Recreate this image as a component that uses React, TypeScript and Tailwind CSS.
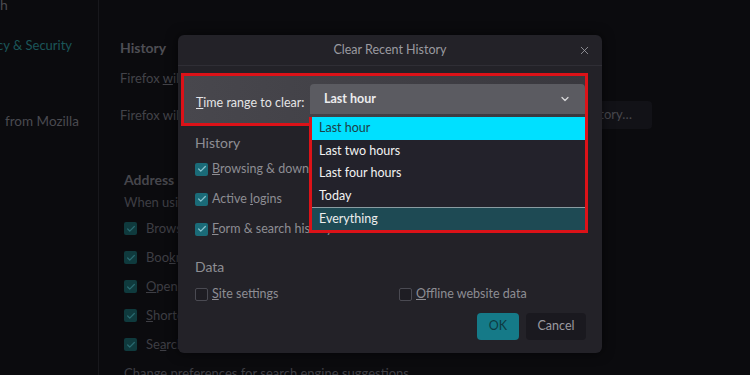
import { Check, X, ChevronDown } from 'lucide-react';

function DimBox({ label }: { label: React.ReactNode }) {
  return (
    <div className="flex items-center gap-[9px] h-[29px]">
      <span className="w-[13px] h-[13px] rounded-[2px] bg-[#0f3a3d] flex items-center justify-center">
        <Check className="w-[10px] h-[10px] text-[#2a6a70]" strokeWidth={3} />
      </span>
      <span className="text-[13px] text-[#3e3e44] whitespace-nowrap">{label}</span>
    </div>
  );
}

function Box({ checked, label }: { checked?: boolean; label: React.ReactNode }) {
  return (
    <div className="flex items-center gap-[4px] h-[18px]">
      {checked ? (
        <span className="w-[13px] h-[13px] rounded-[2px] bg-[#1a6b78] flex items-center justify-center">
          <Check className="w-[10px] h-[10px] text-[#8cc4cf]" strokeWidth={3} />
        </span>
      ) : (
        <span className="w-[13px] h-[13px] rounded-[2px] border border-[#4a4a52] bg-[#1e1d23]" />
      )}
      <span className="text-[12.5px] text-[#8d8d93] whitespace-nowrap">{label}</span>
    </div>
  );
}

export default function App() {
  return (
    <div className="relative w-[750px] h-[375px] overflow-hidden bg-[#0b0b0e] flex font-[Lato,sans-serif]">
      {/* sidebar */}
      <div className="w-[99px] shrink-0 border-r border-[#18181c] flex flex-col">
        <div className="text-[14px] text-[#4a4a50] leading-[20px] -mt-[5px]">h</div>
        <div className="text-[13px] text-[#1b5659] leading-[20px] mt-[20px] -ml-[3px] whitespace-nowrap">cy &amp; Security</div>
        <div className="text-[13.5px] text-[#4a4a50] leading-[20px] mt-[56px] ml-[5px] whitespace-nowrap">from Mozilla</div>
      </div>
      {/* main */}
      <div className="flex-1 pl-[21px] flex flex-col">
        <div className="mt-[38px] text-[14px] font-bold text-[#4e4e54] leading-[20px]">History</div>
        <div className="mt-[11px] text-[13px] text-[#434349] leading-[18px]">Firefox <span className="underline">w</span>ill</div>
        <div className="mt-[14px] pr-[98px] flex items-center justify-between">
          <div className="text-[13px] text-[#434349] leading-[18px]">Firefox will</div>
          <div className="h-[28px] w-[140px] bg-[#121217] rounded-[4px] flex items-center justify-end pr-[20px] text-[13px] text-[#48484e]">
            Clear History…
          </div>
        </div>
        <div className="ml-[4px] mt-[41px] flex flex-col">
          <div className="text-[14px] font-bold text-[#46464c] leading-[20px]">Address</div>
          <div className="mt-[3px] text-[13px] text-[#3e3e44] leading-[18px]">When using the address bar</div>
          <div className="mt-[3px] flex flex-col">
            <DimBox label="Browsing history" />
            <DimBox label={<>Boo<span className="underline">k</span>marks</>} />
            <DimBox label={<><span className="underline">O</span>pen tabs</>} />
            <DimBox label={<><span className="underline">S</span>hortcuts</>} />
            <DimBox label={<>Se<span className="underline">a</span>rch engines</>} />
          </div>
          <div className="mt-[5px] text-[13px] text-[#3e3e44] leading-[18px]">Change preferences for search engine suggestions</div>
        </div>
      </div>

      {/* dialog */}
      <div className="absolute left-[178px] top-[35px] w-[424px] h-[318px] bg-[#232228] rounded-[6px] flex flex-col shadow-[0_0_12px_rgba(0,0,0,0.6)]">
        <div className="relative h-[31px] border-b border-[#2f2e35] flex items-center justify-center shrink-0">
          <span className="text-[12.5px] text-[#9a9aa0]">Clear Recent History</span>
          <X className="absolute right-[11px] top-[9px] w-[13px] h-[13px] text-[#a0a0a6]" strokeWidth={1.5} />
        </div>
        <div className="relative flex-1 flex flex-col">
          {/* highlighted time range row */}
          <div className="ml-[3px] w-[407px] mt-[7px] h-[53px] border-[3px] border-[#dc1218] bg-gradient-to-r from-[#48474d] to-[#39383e] flex">
            <div className="pl-[12px] pt-[18px] text-[12.5px] text-[#e4e4e6] w-[126px] shrink-0 whitespace-nowrap">
              <span className="underline">T</span>ime range to clear:
            </div>
            <div className="mt-[8px] h-[30px] flex-1 bg-[#5b5b61] rounded-t-[4px] flex items-center pl-[14px] pr-[14px]">
              <span className="text-[12.5px] font-bold text-[#ececee] flex-1">Last hour</span>
              <ChevronDown className="w-[12px] h-[12px] text-[#d8d8da]" strokeWidth={2.5} />
            </div>
          </div>
          {/* dropdown */}
          <div className="absolute left-[131px] top-[51px] w-[279px] h-[116px] border-x-[3px] border-b-[3px] border-[#dc1218] bg-[#23222b] flex flex-col z-10">
            <div className="h-[23px] bg-[#00e0ff] text-[#1d3f48] text-[12.5px] flex items-center pl-[7px]">Last hour</div>
            <div className="h-[22px] text-[#f2f2f2] text-[12.5px] flex items-center pl-[7px]">Last two hours</div>
            <div className="h-[23px] text-[#f2f2f2] text-[12.5px] flex items-center pl-[7px]">Last four hours</div>
            <div className="h-[22px] text-[#f2f2f2] text-[12.5px] flex items-center pl-[7px]">Today</div>
            <div className="flex-1 bg-[#1e4a54] border-t border-[#8a9ca2] text-[#ededed] text-[12.5px] flex items-center pl-[7px]">Everything</div>
          </div>

          <div className="pl-[17px] mt-[7px] text-[14px] text-[#8e8e94] leading-[20px]">History</div>
          <div className="pl-[17px] mt-[7px] flex flex-col gap-[12px]">
            <Box checked label={<><span className="underline">B</span>rowsing &amp; down</>} />
            <Box checked label={<>Active <span className="underline">l</span>ogins</>} />
            <Box checked label={<><span className="underline">F</span>orm &amp; search history</>} />
          </div>
          <div className="pl-[17px] mt-[19px] text-[14px] text-[#8e8e94] leading-[20px]">Data</div>
          <div className="pl-[17px] mt-[8px] flex">
            <div className="w-[204px]">
              <Box label={<><span className="underline">S</span>ite settings</>} />
            </div>
            <Box label={<><span className="underline">O</span>ffline website data</>} />
          </div>
          <div className="mt-[10px] pr-[16px] flex justify-end gap-[7px]">
            <div className="w-[42px] h-[27px] rounded-[4px] bg-[#157a88] text-[#0e3a42] text-[12.5px] flex items-center justify-center">OK</div>
            <div className="w-[60px] h-[27px] rounded-[4px] bg-[#1a191f] text-[#9a9aa0] text-[12.5px] flex items-center justify-center">Cancel</div>
          </div>
        </div>
      </div>
    </div>
  );
}
